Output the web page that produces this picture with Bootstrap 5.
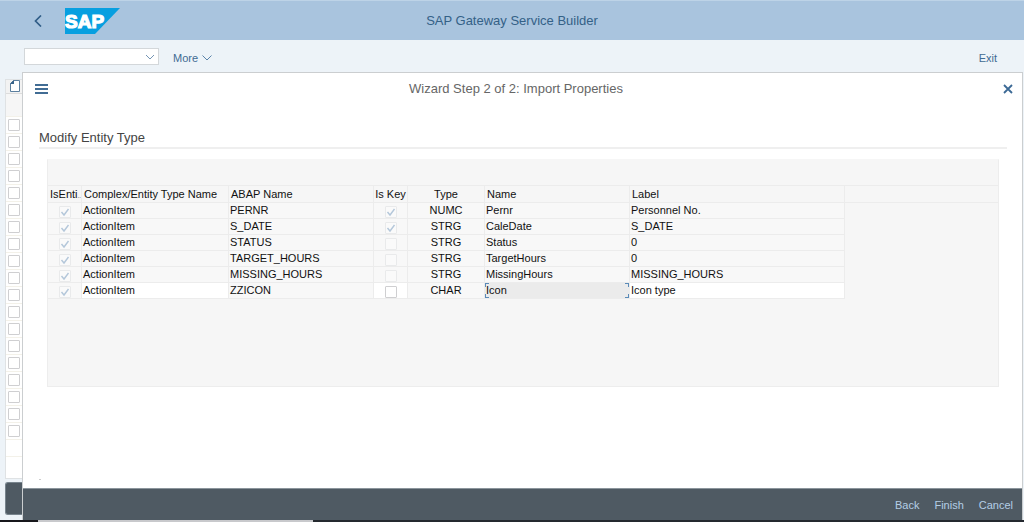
<!DOCTYPE html>
<html lang="en">
<head>
<meta charset="utf-8">
<meta name="viewport" content="width=device-width, initial-scale=1">
<title>SAP Gateway Service Builder</title>
<link href="https://cdn.jsdelivr.net/npm/bootstrap@5.3.0/dist/css/bootstrap.min.css" rel="stylesheet">
<style>
body{font:11px/16px "Liberation Sans",Arial,sans-serif;background:#edf3f8;color:#111}
.link-btn{border:0;background:none;padding:0;color:#3f6b93;line-height:16px}
.shell-bar{height:40px;background:#a9c4de;border-top:1px solid #bdd3e7;color:#346187;font-size:13px}
.side{flex:1 1 0}
.back-btn{margin-left:34px}
.logo{margin-left:23px}
.tools{height:32px;padding:8px 27px 0 24px}
.tools .link-btn{margin-top:2px}
.tools .more-btn{margin-left:14px}
.cmd{width:135px;height:17px;border:1px solid #d3d7da;border-radius:0;background-color:#fff;appearance:none;padding:0 18px 0 4px;background-repeat:no-repeat;background-position:right 3px center;background-size:10px 6px;background-image:url("data:image/svg+xml,%3Csvg xmlns='http://www.w3.org/2000/svg' viewBox='0 0 10 6'%3E%3Cpath d='M1 1l4 4 4-4' fill='none' stroke='%237595b4'/%3E%3C/svg%3E")}
.rail{width:22px;flex:none;padding:7px 0 5px 5px}
.rail-list{border:solid #dfe2e4;border-width:1px 0 1px 1px;background:#fff}
.rail-tool{height:14px;background:#f2f2f2;border-bottom:1px solid #dcdcdc;padding-left:4px}
.rail-head{height:22px;background:#f6f6f6}
.rail-row{height:17px;border-top:1px solid #f3f1e9;padding-left:2px}
.rail-foot{height:33px;margin-top:3px;background:#4f5a63;border:1px solid #78848d;border-right:0;border-radius:3px 0 0 3px}
.tick{appearance:none;width:12px;height:12px;margin:0;border:1px solid #cfcfd1;border-radius:1px;background:#fff;display:block;flex:none}
.tick:disabled{border-color:#e9eaeb;background:#fafafa}
.tick:checked{background:#fafafa url("data:image/svg+xml,%3Csvg xmlns='http://www.w3.org/2000/svg' viewBox='0 0 10 10'%3E%3Cpath d='M1.500 5l2.500 3L8.500 2' fill='none' stroke='%23b4c7da' stroke-width='1.400'/%3E%3C/svg%3E") center/10px no-repeat}
.wizard{background:#fff;border:1px solid #cbced0;border-bottom:0;min-width:0;margin-right:1px}
.wizard-bar{height:32px;font-size:13px;color:#666;padding:0 9px 0 12px}
.wizard-body{padding:25px 15px 8px 16px}
.wizard-body h2{font-size:13px;line-height:16px;color:#444;margin:0 0 10px;padding-bottom:1px;border-bottom:2px solid #efefef}
.grid-panel{background:#f6f6f6;border:1px solid #ededed;border-top-color:#f6f6f6;height:228px;margin:0 8px;padding-top:25px}
.props{table-layout:fixed;width:100%;border-collapse:separate;border-spacing:0}
.props th,.props td{padding:0 0 0 2px;height:16px;line-height:15px;border:solid #ececec;border-width:0 1px 1px 0;white-space:nowrap;font-weight:400;background:#f8f8f8}
.props th{border-top-width:1px;height:18px;line-height:16px;background:#f6f6f6}
.props td{padding-left:1px}
.props .mid{text-align:center;padding:0}
.props .mid .tick{margin:2px auto 0}
.props th:last-child{border-right:0}
.props td:last-child{border:0;background:none}
.props td.open{background:#fff}
.dots{font-size:6px;line-height:6px}
.cell-input{display:block;width:100%;height:15px;border:0;padding:0;background:none;line-height:15px;color:inherit;outline:0}
.props td.current{background:#ebebeb;padding:0}
.bracket{position:relative;padding-left:1px}
.bracket::before,.bracket::after{content:"";position:absolute;top:0;bottom:0;width:4px;border:1px solid #5b8bb8;-webkit-mask:linear-gradient(#000 0 4px,transparent 4px 11px,#000 11px);mask:linear-gradient(#000 0 4px,transparent 4px 11px,#000 11px)}
.bracket::before{left:0;border-right:0}
.bracket::after{right:0;border-left:0}
.status-mark{width:2px;height:1px;background:#ccc}
.actions{height:32px;background:#4f5a63;border-top:1px solid #8b959c;gap:15px;padding-right:9px}
.actions .link-btn{color:#b4cee6}
.taskline{height:2px;background:linear-gradient(90deg,#17171b 38px,#c8c9cc 38px 313px,#24292f 313px)}
</style>
</head>
<body>
<div class="d-flex flex-column min-vh-100">
  <header class="shell-bar d-flex align-items-center">
    <div class="side d-flex align-items-center">
      <button class="link-btn back-btn d-flex" aria-label="Back"><svg width="8" height="12" viewBox="0 0 8 12"><path d="M7 .5L1.500 6 7 11.500" fill="none" stroke="#315e88" stroke-width="1.700"/></svg></button>
      <svg class="logo" width="55" height="26" viewBox="0 0 55 26" role="img" aria-label="SAP"><path d="M0 0H55L30 26H0Z" fill="#079fe0"/><text x="0" y="20" fill="#fff" stroke="#fff" stroke-width="1.200" font-family="Liberation Sans,sans-serif" font-weight="700" font-size="19">SAP</text></svg>
    </div>
    <div>SAP Gateway Service Builder</div>
    <div class="side"></div>
  </header>
  <div class="tools d-flex align-items-start">
    <select class="cmd" aria-label="Command"><option></option></select>
    <button class="link-btn more-btn d-flex align-items-center gap-1">More <svg width="10" height="6" viewBox="0 0 10 6"><path d="M.5 .5L5 5 9.500 .5" fill="none" stroke="#5b83a9"/></svg></button>
    <button class="link-btn ms-auto">Exit</button>
  </div>
  <div class="d-flex flex-grow-1">
    <aside class="rail d-flex flex-column">
      <div class="rail-list flex-grow-1" id="rail">
        <div class="rail-tool"><svg class="d-block" width="10" height="12" viewBox="0 0 10 12"><path d="M3.500 .5H9.500V11.500H.5V3.500Z" fill="#fff" stroke="#5b7f9f"/><path d="M0 4L4 0V4Z" fill="#376289"/></svg></div>
        <div class="rail-head"></div>
      </div>
      <div class="rail-foot"></div>
    </aside>
    <main class="wizard flex-grow-1 d-flex flex-column">
      <div class="wizard-bar d-flex align-items-center">
        <div class="side"><button class="link-btn d-flex" aria-label="Menu"><svg width="13" height="10" viewBox="0 0 13 10"><path d="M0 1H13M0 5H13M0 9H13" stroke="#416c94" stroke-width="1.800"/></svg></button></div>
        <div class="me-3">Wizard Step 2 of 2: Import Properties</div>
        <div class="side d-flex justify-content-end"><button class="link-btn d-flex" aria-label="Close"><svg width="10" height="10" viewBox="0 0 10 10"><path d="M1 1L9 9M9 1L1 9" stroke="#3b6995" stroke-width="1.800"/></svg></button></div>
      </div>
      <div class="wizard-body flex-grow-1 d-flex flex-column">
        <h2>Modify Entity Type</h2>
        <div class="grid-panel">
          <table class="props">
            <colgroup><col width="34"><col width="147"><col width="145"><col width="34"><col width="77"><col width="145"><col width="215"><col></colgroup>
            <thead><tr><th>IsEnti<span class="dots">..</span></th><th>Complex/Entity Type Name</th><th>ABAP Name</th><th class="mid">Is Key</th><th class="mid">Type</th><th>Name</th><th>Label</th><th></th></tr></thead>
            <tbody id="rows"></tbody>
          </table>
        </div>
        <div class="status-mark mt-auto"></div>
      </div>
      <footer class="actions d-flex align-items-center justify-content-end">
        <button class="link-btn">Back</button><button class="link-btn">Finish</button><button class="link-btn">Cancel</button>
      </footer>
    </main>
  </div>
  <div class="taskline"></div>
</div>
<script src="https://cdn.jsdelivr.net/npm/bootstrap@5.3.0/dist/js/bootstrap.bundle.min.js"></script>
<script>
const data = [
  ["PERNR", 1, "NUMC", "Pernr", "Personnel No."],
  ["S_DATE", 1, "STRG", "CaleDate", "S_DATE"],
  ["STATUS", 0, "STRG", "Status", "0"],
  ["TARGET_HOURS", 0, "STRG", "TargetHours", "0"],
  ["MISSING_HOURS", 0, "STRG", "MissingHours", "MISSING_HOURS"],
  ["ZZICON", 0, "CHAR", "Icon", "Icon type"]
];
document.getElementById("rows").innerHTML = data.map(([abap, key, type, name, label], i) => {
  const edit = i === data.length - 1, open = edit ? "open" : "";
  return `<tr><td class="mid"><input class="tick" type="checkbox" checked disabled aria-label="${abap} is entity"></td>
  <td class="${open}">ActionItem</td><td>${abap}</td>
  <td class="mid ${open}"><input class="tick" type="checkbox" ${key ? "checked" : ""} ${edit ? "" : "disabled"} aria-label="${abap} is key"></td>
  <td class="mid">${type}</td>
  <td class="${edit ? "current" : ""}">${edit ? `<div class="bracket"><input class="cell-input" value="${name}" aria-label="Name"></div>` : name}</td>
  <td class="${open}">${edit ? `<input class="cell-input" value="${label}" aria-label="Label">` : label}</td><td></td></tr>`;
}).join("");
const rail = document.getElementById("rail");
for (let i = 0; i < 21; i++) {
  rail.insertAdjacentHTML("beforeend", `<div class="rail-row d-flex align-items-center">${i < 19 ? `<input class="tick" type="checkbox" aria-label="Row ${i + 1}">` : ""}</div>`);
}
</script>
</body>
</html>
